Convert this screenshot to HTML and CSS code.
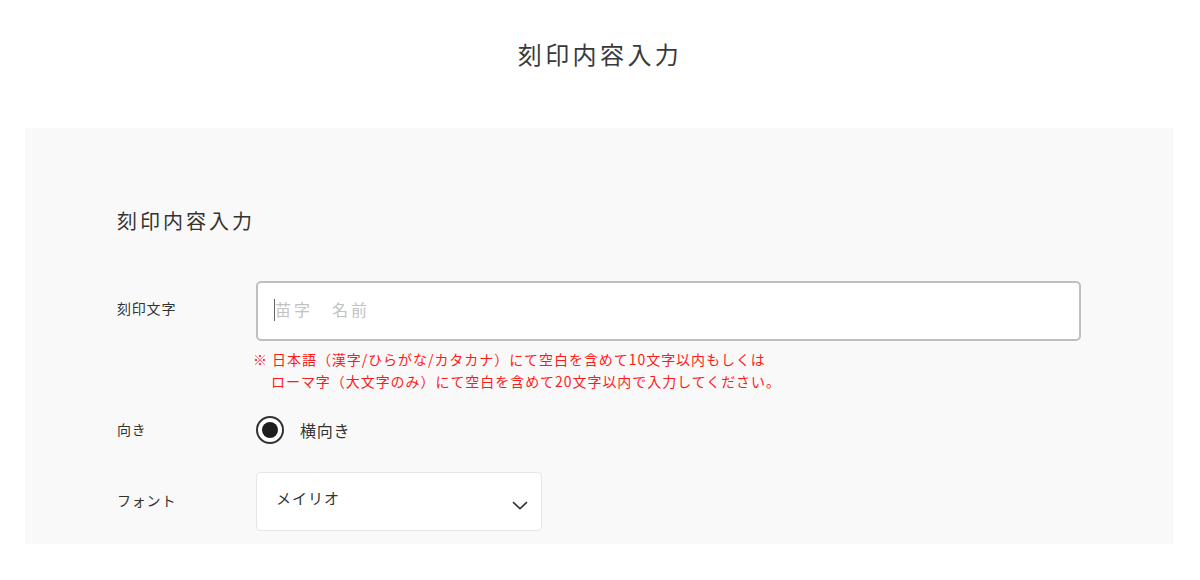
FILE: index.html
```html
<!DOCTYPE html>
<html lang="ja">
  <head>
    <meta charset="UTF-8" />
    <meta name="viewport" content="width=device-width, initial-scale=1.0" />
    <link rel="stylesheet" href="styles.css">
  </head>
  <body>
    <h1 class="page-title">刻印内容入力</h1>

    <div class="page-wrap">
      <section class="engrave-panel">
        <h2 class="panel-title">刻印内容入力</h2>

        <div class="form-grid">
          <!-- 刻印文字 -->
          <label class="form-label form-label-tall" for="engrave-text">刻印文字</label>
          <div class="form-field">
            <div class="input-wrap">
              <input id="engrave-text" class="text-input" type="text" placeholder="苗字　名前" />
              <span class="input-caret"></span>
            </div>
            <p class="note">※ 日本語（漢字/ひらがな/カタカナ）にて空白を含めて10文字以内もしくは<br />ローマ字（大文字のみ）にて空白を含めて20文字以内で入力してください。</p>
          </div>

          <!-- 向き -->
          <div class="form-label form-label-radio">向き</div>
          <div class="form-field">
            <label class="radio">
              <span class="radio-mark"></span>
              <span class="radio-text">横向き</span>
            </label>
          </div>

          <!-- フォント -->
          <div class="form-label form-label-select">フォント</div>
          <div class="form-field">
            <div class="select-box">
              <span class="select-value">メイリオ</span>
              <svg class="select-arrow" width="16" height="9" viewBox="0 0 16 9">
                <path d="M1 1.2 L8 7.6 L15 1.2" fill="none" stroke="#333" stroke-width="1.6" />
              </svg>
            </div>
          </div>
        </div>
      </section>
    </div>
  </body>
</html>
```

FILE: styles.css
```css
body {
  margin: 0;
  background-color: #fff;
  color: #333;
  font-family: "Noto Sans CJK JP", "Noto Sans", sans-serif;
}

.page-title {
  margin: 0;
  padding-top: 37px;
  height: 90px;
  box-sizing: border-box;
  font-size: 24px;
  font-weight: normal;
  line-height: 34px;
  letter-spacing: 3.4px;
  text-align: center;
  color: #3a3a3a;
}

.page-wrap {
  padding: 38px 27px 0 25px;
}

.engrave-panel {
  background-color: #f9f9f9;
  padding: 78px 92px 13px 92px;
}

.panel-title {
  margin: 0 0 45px 0;
  font-size: 20px;
  font-weight: normal;
  line-height: 30px;
  letter-spacing: 3px;
  color: #333;
}

.form-grid {
  display: grid;
  grid-template-columns: 139px 825px;
  row-gap: 24px;
}

.form-label {
  font-size: 14px;
  letter-spacing: 0.8px;
  color: #333;
}

.form-label-tall {
  line-height: 54px;
}

.form-label-radio {
  line-height: 26px;
}

.form-label-select {
  padding-top: 2px;
  line-height: 52px;
}

.input-wrap {
  position: relative;
}

.text-input {
  display: block;
  width: 100%;
  height: 60px;
  box-sizing: border-box;
  border: 2px solid #bfbfbf;
  border-radius: 5px;
  background-color: #fff;
  padding: 0 16px 4px 17px;
  font-family: inherit;
  font-size: 16px;
  letter-spacing: 3px;
  color: #333;
  outline: none;
}

.text-input::placeholder {
  color: #c2c2c2;
}

/* focused caret in the screenshot */
.input-caret {
  position: absolute;
  left: 18px;
  top: 18px;
  width: 1px;
  height: 22px;
  background-color: #666;
}

.note {
  margin: 7px 0 0 0;
  padding-left: 15px;
  text-indent: -18px;
  font-size: 14px;
  line-height: 22px;
  letter-spacing: 0.95px;
  color: #ff1a1a;
}

.radio {
  display: flex;
  align-items: center;
  gap: 16px;
  height: 28px;
  margin-bottom: 4px;
}

.radio-mark {
  width: 28px;
  height: 28px;
  box-sizing: border-box;
  border: 2px solid #333;
  border-radius: 50%;
  background-color: #fff;
  display: flex;
  align-items: center;
  justify-content: center;
}

.radio-mark::after {
  content: "";
  width: 16px;
  height: 16px;
  border-radius: 50%;
  background-color: #1e1e1e;
}

.radio-text {
  font-size: 16px;
  letter-spacing: 0.8px;
  color: #333;
}

.select-box {
  width: 286px;
  height: 59px;
  box-sizing: border-box;
  border: 1px solid #e6e6e6;
  border-radius: 4px;
  background-color: #fff;
  display: flex;
  justify-content: space-between;
  padding: 15px 13px 0 19px;
}

.select-value {
  font-size: 15px;
  line-height: 20px;
  letter-spacing: 1px;
  color: #333;
}

.select-arrow {
  margin-top: 13px;
}
```
